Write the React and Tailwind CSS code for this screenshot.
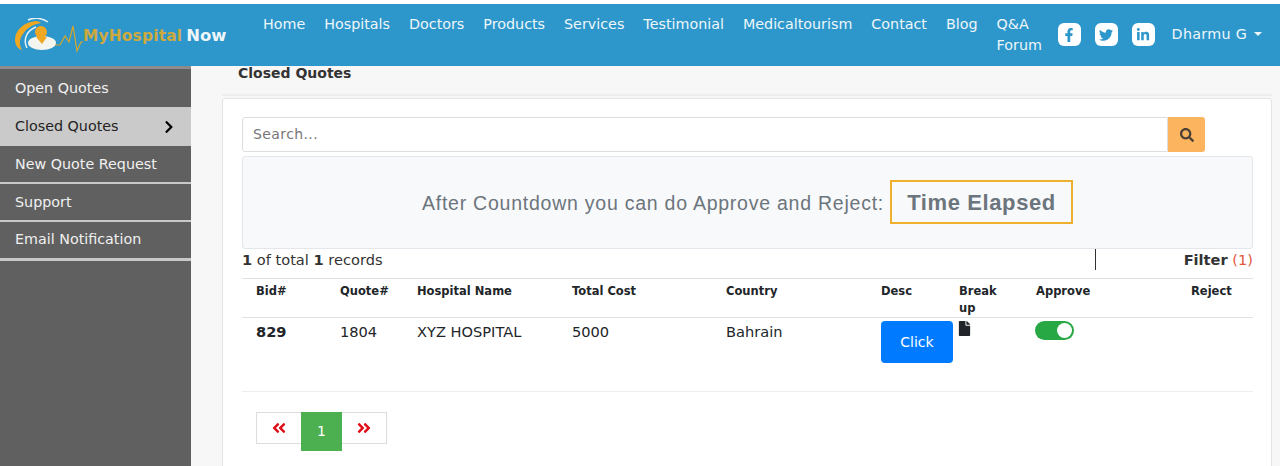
import { FaFacebookF, FaTwitter, FaLinkedinIn, FaFile, FaSearch, FaChevronRight, FaAngleDoubleLeft, FaAngleDoubleRight } from "react-icons/fa";

const navLinks = ["Home", "Hospitals", "Doctors", "Products", "Services", "Testimonial", "Medicaltourism", "Contact", "Blog"];
const sideLinks = [
  { label: "Open Quotes", cls: "h-[39px] border-b pt-px" },
  { label: "Closed Quotes", cls: "h-[38px] border-b", active: true },
  { label: "New Quote Request", cls: "h-[38px] border-b-2 pt-px" },
  { label: "Support", cls: "h-[38px] border-b-2 pt-px" },
  { label: "Email Notification", cls: "h-[39px] border-b-[3px]" },
];
const cols = ["Bid#", "Quote#", "Hospital Name", "Total Cost", "Country", "Desc", "Break up", "Approve", "Reject"];
const gridCols = "grid grid-cols-[84px_77px_155px_154px_155px_78px_77px_155px_62px]";

function Logo() {
  return (
    <div className="flex w-[263px] shrink-0 items-start pl-[15px] pt-[14px]">
      <svg width="68" height="36" viewBox="0 0 68 36" className="shrink-0">
        <path d="M21 3C9 4 0 12 0 22C0 27 3 31 7 32C4 27 4 21 8 16C11 11 16 7 26 5C25 4 23 3 21 3Z" fill="#f0a823" />
        <path d="M13 2C19 -1 27 0 33 4" stroke="#e6f2f7" strokeWidth="1.5" fill="none" />
        <path d="M12 30C8 22 11 13 21 9" stroke="#e6f2f7" strokeWidth="1.5" fill="none" />
        <ellipse cx="27" cy="25" rx="14" ry="7" fill="#f5f5ef" />
        <circle cx="26" cy="14" r="6" fill="#f0a823" />
        <path d="M21 19H32L27 26Z" fill="#f0a823" />
        <path d="M40 27H45L50 18L54 24L58 8L62 33L66 24H68" stroke="#d8a62c" strokeWidth="1.2" fill="none" />
      </svg>
      <span className="mt-[11px] text-[15.4px] font-bold leading-none tracking-[0.2px] text-[#cda93f]">MyHospital</span>
      <span className="ml-[4px] mt-[10px] text-[16.4px] font-bold leading-none text-[#eef6fa]">Now</span>
    </div>
  );
}

function Social({ children }) {
  return (
    <a className="flex h-[23px] w-[23px] items-center justify-center rounded-[6px] bg-white text-[14px] text-[#2d97cb]">
      {children}
    </a>
  );
}

function Header() {
  return (
    <header className="flex h-[62px] items-start bg-[#2d97cb] text-[14.3px] text-[#eef6fa]">
      <Logo />
      <nav className="flex gap-[19px] pt-[10px] leading-[21px]">
        {navLinks.map((l) => (
          <a key={l}>{l}</a>
        ))}
        <a className="w-[46px]">Q&amp;A Forum</a>
      </nav>
      <div className="ml-[15px] mt-[19px] flex gap-[14px]">
        <Social><FaFacebookF /></Social>
        <Social><FaTwitter /></Social>
        <Social><FaLinkedinIn /></Social>
      </div>
      <div className="ml-[17px] mt-[20px] flex items-center gap-[7px] leading-[21px] tracking-[0.3px]">
        Dharmu G
        <span className="mt-[-1px] h-0 w-0 border-x-[4px] border-t-[4px] border-x-transparent border-t-[#eef6fa]" />
      </div>
    </header>
  );
}

function Sidebar() {
  return (
    <aside className="w-[191px] shrink-0 self-stretch border-t-[3px] border-[#8c8c8c] bg-[#606060] text-[14.3px]">
      {sideLinks.map((s) => (
        <a
          key={s.label}
          className={`flex ${s.cls} items-center justify-between border-[#c9c9c9] px-[15px] ${
            s.active ? "bg-[#cacaca] text-[#222]" : "text-[#f0f0f0]"
          }`}
        >
          {s.label}
          {s.active && <FaChevronRight className="text-[14px] text-black" />}
        </a>
      ))}
    </aside>
  );
}

function QuoteTable() {
  return (
    <div className="text-[#212529]">
      <div className={`${gridCols} h-[40px] border-y border-[#dee2e6] pl-[14px] pt-[4px] text-[11.5px] font-bold leading-[17px]`}>
        {cols.map((c) => (
          <div key={c} className={c === "Break up" ? "w-[50px]" : ""}>{c}</div>
        ))}
      </div>
      <div className={`${gridCols} h-[74px] border-b border-[#eeeeee] pl-[14px] text-[14.6px]`}>
        <div className="pt-[3px] font-bold leading-[21px]">829</div>
        <div className="pt-[3px] leading-[21px]">1804</div>
        <div className="pt-[3px] leading-[21px]">XYZ HOSPITAL</div>
        <div className="pt-[3px] leading-[21px]">5000</div>
        <div className="pt-[3px] leading-[21px]">Bahrain</div>
        <div className="pt-[3px]">
          <button className="h-[42px] w-[72px] rounded-[4px] bg-[#007bff] text-[14px] text-white">Click</button>
        </div>
        <div className="-ml-[2px] pt-[3px] text-[15px]"><FaFile /></div>
        <div className="-ml-px pt-[3px]">
          <div className="flex h-[19px] w-[39px] items-center justify-end rounded-full bg-[#28a745] pr-[2px]">
            <span className="h-[15px] w-[15px] rounded-full bg-white" />
          </div>
        </div>
        <div />
      </div>
    </div>
  );
}

function Pagination() {
  return (
    <div className="ml-[14px] mt-[20px] flex h-[39px] items-start text-[14px]">
      <a className="flex h-[32px] w-[45px] items-center justify-center border border-r-0 border-[#dddddd] bg-white text-[16px] text-[#e0101a]"><FaAngleDoubleLeft /></a>
      <a className="flex h-[39px] w-[41px] items-center justify-center bg-[#4caf50] text-white">1</a>
      <a className="flex h-[32px] w-[45px] items-center justify-center border border-l-0 border-[#dddddd] bg-white text-[16px] text-[#e0101a]"><FaAngleDoubleRight /></a>
    </div>
  );
}

export default function App() {
  return (
    <div className="h-[466px] overflow-hidden bg-white pt-[4px] font-['DejaVu_Sans',sans-serif]">
      <Header />
      <div className="flex h-[400px] bg-[#f7f7f7]">
        <Sidebar />
        <main className="ml-[31px] mr-[8px] flex-1">
          <h2 className="h-[30px] border-b-2 border-[#eeeeee] pl-[16px] text-[14px] font-bold leading-[14px] text-[#333]">Closed Quotes</h2>
          <section className="mt-[2px] h-[400px] rounded-t-[3px] border border-[#e4e4e4] bg-white pl-[19px] pr-[18px] pt-[18px]">
            <div className="flex h-[35px] w-[963px]">
              <input
                readOnly
                placeholder="Search..."
                className="min-w-0 flex-1 rounded-l-[3px] border border-[#dedede] px-[10px] text-[14px] tracking-[0.4px] text-[#555] placeholder:text-[#777]"
              />
              <button className="flex w-[37px] items-center justify-center rounded-r-[3px] bg-[#fdb45e] text-[14px] text-[#4a4036]"><FaSearch /></button>
            </div>
            <div className="mt-[4px] flex h-[93px] items-center justify-center gap-[6px] rounded-[3px] border border-[#e3e6ea] bg-[#f8f9fa] font-['Liberation_Sans',sans-serif] text-[#6c757d]">
              <span className="pt-[3px] text-[19.5px] tracking-[0.76px]">After Countdown you can do Approve and Reject:</span>
              <span className="-mt-[2px] flex h-[44px] w-[183px] items-center justify-center border-2 border-[#efb02e] pt-[2px] text-[22px] font-bold tracking-[0.6px]">Time Elapsed</span>
            </div>
            <div className="flex h-[29px] items-start text-[14.6px] leading-[21px] text-[#333]">
              <div className="flex-1"><b>1</b> of total <b>1</b> records</div>
              <div className="flex h-[21px] w-[158px] items-center justify-end border-l border-[#333]">
                <b>Filter</b>&nbsp;<span className="text-[#e2583e]">(1)</span>
              </div>
            </div>
            <QuoteTable />
            <Pagination />
          </section>
        </main>
      </div>
    </div>
  );
}
